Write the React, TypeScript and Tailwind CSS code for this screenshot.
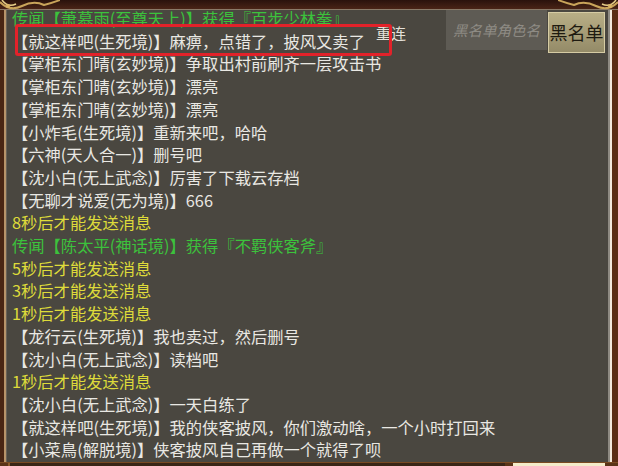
type Kind = 'chat' | 'rumor' | 'wait';

interface Line {
  kind: Kind;
  text: string;
}

const lines: Line[] = [
  { kind: 'rumor', text: '传闻【萧慕雨(至尊天上)】获得『百步少林拳』' },
  { kind: 'chat', text: '【就这样吧(生死境)】麻痹，点错了，披风又卖了' },
  { kind: 'chat', text: '【掌柜东门晴(玄妙境)】争取出村前刷齐一层攻击书' },
  { kind: 'chat', text: '【掌柜东门晴(玄妙境)】漂亮' },
  { kind: 'chat', text: '【掌柜东门晴(玄妙境)】漂亮' },
  { kind: 'chat', text: '【小炸毛(生死境)】重新来吧，哈哈' },
  { kind: 'chat', text: '【六神(天人合一)】删号吧' },
  { kind: 'chat', text: '【沈小白(无上武念)】厉害了下载云存档' },
  { kind: 'chat', text: '【无聊才说爱(无为境)】666' },
  { kind: 'wait', text: '8秒后才能发送消息' },
  { kind: 'rumor', text: '传闻【陈太平(神话境)】获得『不羁侠客斧』' },
  { kind: 'wait', text: '5秒后才能发送消息' },
  { kind: 'wait', text: '3秒后才能发送消息' },
  { kind: 'wait', text: '1秒后才能发送消息' },
  { kind: 'chat', text: '【龙行云(生死境)】我也卖过，然后删号' },
  { kind: 'chat', text: '【沈小白(无上武念)】读档吧' },
  { kind: 'wait', text: '1秒后才能发送消息' },
  { kind: 'chat', text: '【沈小白(无上武念)】一天白练了' },
  { kind: 'chat', text: '【就这样吧(生死境)】我的侠客披风，你们激动啥，一个小时打回来' },
  { kind: 'chat', text: '【小菜鳥(解脱境)】侠客披风自己再做一个就得了呗' },
];

const colorOf: Record<Kind, string> = {
  chat: 'text-[#e9e8e3]',
  rumor: 'text-[#3cc23c]',
  wait: 'text-[#dedb3a]',
};

function Ornament({ flip }: { flip?: boolean }) {
  return (
    <svg
      width="60"
      height="14"
      viewBox="0 0 60 14"
      className={flip ? 'absolute top-0 right-0 -scale-x-100' : 'absolute top-0 left-0'}
    >
      <path d="M0 2 Q10 12 22 6 T44 5 Q52 3 60 0" fill="none" stroke="#c9a45a" strokeWidth="2" />
      <path d="M2 0 Q8 8 16 4" fill="none" stroke="#e8d08a" strokeWidth="1.5" />
      <circle cx="8" cy="6" r="2" fill="#d8b464" />
    </svg>
  );
}

export default function App() {
  return (
    <div
      className="w-[618px] h-[466px] overflow-hidden relative flex flex-col bg-[#3a1c10]"
      style={{ fontFamily: '"Noto Sans CJK SC", "Noto Sans", sans-serif' }}
    >
      {/* top frame */}
      <div className="h-[10px] relative bg-gradient-to-b from-[#2a120c] to-[#4a2416] border-b border-[#8a7a68]">
        <Ornament />
        <div className="absolute top-0 right-0 w-[70px] h-[14px]">
          <Ornament flip />
        </div>
      </div>

      <div className="flex-1 flex min-h-0">
        {/* left frame */}
        <div className="w-[7px] flex">
          <div className="w-[4px] bg-[#4a2614]" />
          <div className="w-[2px] bg-[#b8946a]" />
          <div className="w-[1px] bg-[#6a6258]" />
        </div>

        {/* chat area */}
        <div className="flex-1 relative overflow-hidden bg-[#4a4740]">
          <div className="mt-[-3px] pl-[5px] text-[16.3px] leading-[22.7px] whitespace-nowrap">
            {lines.map((l, i) => (
              <div key={i} className={colorOf[l.kind]}>
                {l.text}
              </div>
            ))}
          </div>

          {/* controls */}
          <div className="absolute top-0 right-[3px] flex items-start">
            <span className="mt-[15px] mr-[40px] text-[15px] leading-none text-[#e4e1da]">重连</span>
            <div className="w-[101px] h-[40px] mr-[1px] bg-[#5e5b54] flex items-center justify-center">
              <span className="text-[14.5px] italic text-[#8e8b84]">黑名单角色名</span>
            </div>
            <button className="mt-[2px] w-[57px] h-[41px] bg-gradient-to-b from-[#b8ae86] to-[#948b68] border border-[#d6cca4] text-[18px] text-[#1e1a10] flex items-center justify-center">
              黑名单
            </button>
          </div>

          {/* highlight */}
          <div className="absolute left-[8px] top-[14px] w-[377px] h-[32px] border-[3px] border-[#e2222a] rounded-[3px]" />
        </div>

        {/* right frame */}
        <div className="w-[10px] flex">
          <div className="w-[2px] bg-[#8e8a82]" />
          <div className="w-[2px] bg-[#f2e8dc]" />
          <div className="w-[6px] bg-[#5a2c14]" />
        </div>
      </div>

      {/* bottom input bar */}
      <div className="h-[4px] flex bg-[#5a3418] border-t border-[#7a4a22]">
        <div className="w-[8px]" />
        <div className="w-[497px] bg-[#3a2616] border-l-2 border-[#8a5a2a]" />
        <div className="w-[8px]" />
        <div className="w-[92px] bg-[#f4ecca]" />
      </div>
    </div>
  );
}
